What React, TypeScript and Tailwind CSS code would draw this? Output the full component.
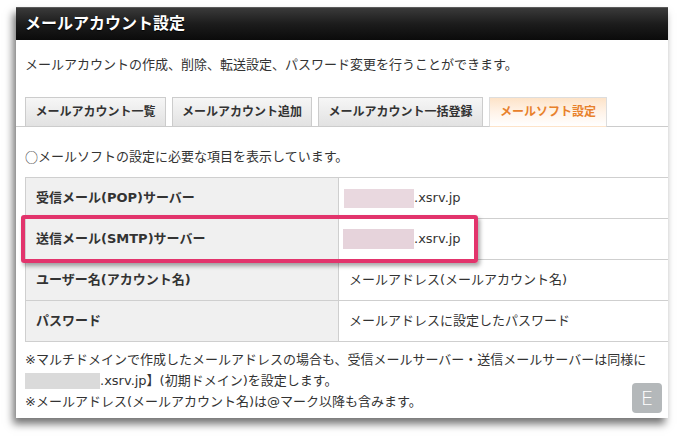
import { ReactNode } from 'react';

const tabs = [
  { label: 'メールアカウント一覧', width: 'w-[141px]' },
  { label: 'メールアカウント追加', width: 'w-[140px]' },
  { label: 'メールアカウント一括登録', width: 'w-[165px]' },
];

function Masked({ className }: { className: string }) {
  // placeholder patch for the hidden account id
  return <span className={`inline-block align-middle blur-[0.6px] ${className}`} />;
}

function Row({ label, children, highlight }: { label: string; children: ReactNode; highlight?: boolean }) {
  return (
    <div className="relative flex h-[41px] border-b border-[#cfcfcf]">
      <div className="flex w-[313px] items-center border-r border-[#cfcfcf] bg-[#f0f0f0] pl-[10px] font-bold">
        {label}
      </div>
      <div className="flex flex-1 items-center pl-[10px]">{children}</div>
      {highlight && (
        <div className="pointer-events-none absolute left-[-5px] top-[-4px] z-10 h-[48px] w-[457px] rounded-[3px] border-[4px] border-[#e2346c] shadow-[2px_3px_4px_rgba(0,0,0,0.35)]" />
      )}
    </div>
  );
}

export default function App() {
  return (
    <div className="min-h-screen bg-white pl-[16px] pt-[7px] font-['DejaVu_Sans','Noto_Sans_CJK_JP',sans-serif] text-[13px] text-[#333]">
      <div className="relative h-[411px] w-[652px] bg-white shadow-[-3px_6px_8px_rgba(0,0,0,0.55)]">
        {/* title bar */}
        <div className="flex h-[33px] items-center border-t border-[#5a5a5a] bg-gradient-to-b from-[#3a3a3a] via-[#1c1c1c] to-[#0b0b0b] pl-[9px] text-[16px] font-bold text-white [text-shadow:0_1px_1px_rgba(0,0,0,0.8)]">
          メールアカウント設定
        </div>

        <p className="mt-[15px] pl-[9px] leading-[20px]">
          メールアカウントの作成、削除、転送設定、パスワード変更を行うことができます。
        </p>

        {/* tabs */}
        <div className="mt-[22px] flex h-[30px] items-end gap-[6px] border-b border-[#cccccc] pl-[9px] text-[12px] font-bold">
          {tabs.map((t) => (
            <div
              key={t.label}
              className={`-mb-px flex h-[30px] items-center justify-center border border-[#cccccc] bg-gradient-to-b from-[#f6f6f6] to-[#e2e2e2] ${t.width}`}
            >
              {t.label}
            </div>
          ))}
          <div className="-mb-px flex h-[30px] w-[118px] items-center justify-center border border-b-transparent border-[#dddddd] bg-gradient-to-b from-[#fde3c8] via-[#fff3e8] to-white text-[#e8812b]">
            メールソフト設定
          </div>
        </div>

        <p className="mt-[20px] flex h-[20px] items-center pl-[9px]">
          <span className="font-['Noto_Sans_CJK_JP',sans-serif]">○</span>
          <span>メールソフトの設定に必要な項目を表示しています。</span>
        </p>

        {/* settings table */}
        <div className="ml-[9px] mt-[10px] border-l border-t border-[#cfcfcf]">
          <Row label="受信メール(POP)サーバー">
            <Masked className="-ml-[5px] h-[19px] w-[70px] bg-[#e9d8df]" />
            <span>.xsrv.jp</span>
          </Row>
          <Row label="送信メール(SMTP)サーバー" highlight>
            <Masked className="-ml-[6px] h-[20px] w-[71px] bg-[#e6d3db]" />
            <span>.xsrv.jp</span>
          </Row>
          <Row label="ユーザー名(アカウント名)">メールアドレス(メールアカウント名)</Row>
          <Row label="パスワード">メールアドレスに設定したパスワード</Row>
        </div>

        <div className="mt-[7px] pl-[9px] leading-[21px]">
          <p>※マルチドメインで作成したメールアドレスの場合も、受信メールサーバー・送信メールサーバーは同様に</p>
          <p className="flex items-center">
            <Masked className="h-[16px] w-[75px] bg-[#dadada]" />
            <span>.xsrv.jp】(初期ドメイン)を設定します。</span>
          </p>
          <p>※メールアドレス(メールアカウント名)は@マーク以降も含みます。</p>
        </div>

        <div className="absolute bottom-[5px] right-[6px] flex h-[30px] w-[30px] items-center justify-center rounded-[4px] bg-[#b4b8ba] font-['DejaVu_Sans',sans-serif] text-[20px] font-light text-white">
          E
        </div>
      </div>
    </div>
  );
}
